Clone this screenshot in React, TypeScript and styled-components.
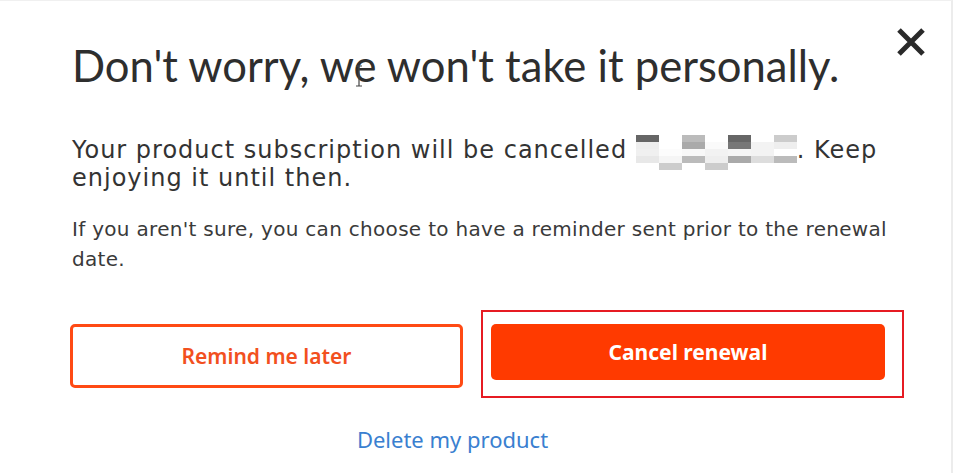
import styled, { createGlobalStyle } from "styled-components";

const GlobalStyle = createGlobalStyle`
  html, body {
    margin: 0;
    padding: 0;
    background: #fff;
  }
  body {
    font-family: "DejaVu Sans", "Noto Sans", sans-serif;
    color: #2b2b2b;
  }
`;

const Dialog = styled.section`
  position: relative;
  box-sizing: border-box;
  width: 953px;
  height: 473px;
  border-top: 1px solid #f0f0f0;
  border-right: 2px solid #ececec;
  padding: 38px 0 0 70px;
`;

const CloseButton = styled.button`
  position: absolute;
  top: 25px;
  right: 24px;
  width: 32px;
  height: 32px;
  padding: 0;
  border: none;
  background: none;
  cursor: pointer;
  color: #2a2a2a;
  svg {
    width: 32px;
    height: 32px;
  }
`;

const Title = styled.h1`
  margin: 0 0 0 2px;
  font-family: Lato, "Noto Sans", sans-serif;
  font-weight: 400;
  font-size: 43.6px;
  line-height: 52px;
  color: #2e2e2e;
`;

const Lead = styled.p`
  margin: 45px 0 0 2px;
  width: 830px;
  font-size: 24px;
  line-height: 28px;
  letter-spacing: 1px;
  color: #333;
`;

const Note = styled.p`
  margin: 22px 0 0 2px;
  width: 830px;
  font-size: 20px;
  line-height: 30px;
  letter-spacing: 0.3px;
  color: #3a3a3a;
`;

const Blur = styled.span`
  position: relative;
  display: inline-block;
  width: 161px;
  height: 20px;
`;

const BlurGrid = styled.span`
  position: absolute;
  left: 0;
  top: -3px;
  display: grid;
  grid-template-columns: repeat(7, 23px);
  grid-auto-rows: 7px;
`;

const Pixel = styled.span<{ $c: string }>`
  background: ${({ $c }) => $c};
`;

const Actions = styled.div`
  display: flex;
  align-items: flex-start;
  gap: 18px;
  margin-top: 50px;
`;

const OutlineButton = styled.button`
  box-sizing: border-box;
  width: 393px;
  height: 64px;
  border: 3px solid #ff4a14;
  border-radius: 5px;
  background: #fff;
  color: #f2501e;
  font-family: "Noto Sans", sans-serif;
  font-weight: 600;
  font-size: 21px;
  cursor: pointer;
`;

const Highlight = styled.div`
  box-sizing: border-box;
  width: 423px;
  height: 88px;
  margin-top: -14px;
  border: 2px solid #e61b23;
  padding: 12px 0 0 8px;
`;

const SolidButton = styled.button`
  box-sizing: border-box;
  width: 394px;
  height: 56px;
  border: none;
  border-radius: 5px;
  background: #ff3a00;
  color: #fff;
  font-family: "Noto Sans", sans-serif;
  font-weight: 700;
  font-size: 21px;
  cursor: pointer;
`;

const LinkRow = styled.div`
  display: flex;
  justify-content: center;
  width: 765px;
  margin-top: 26px;
`;

const TextLink = styled.a`
  color: #3a7fd0;
  font-family: "Noto Sans", sans-serif;
  font-size: 22px;
  line-height: 30px;
  text-decoration: none;
  cursor: pointer;
`;

const Cursor = styled.svg`
  position: absolute;
  left: 354px;
  top: 64px;
  width: 10px;
  height: 22px;
`;

const blurCols = [
  ["#666", "#eee", "#f0f0f0", "#e8e8e8", "#fff"],
  ["#fff", "#fff", "#fcfcfc", "#f5f5f5", "#ccc"],
  ["#bbb", "#aaa", "#f8f8f8", "#bbb", "#fff"],
  ["#fff", "#fafafa", "#f2f2f2", "#eee", "#ccc"],
  ["#666", "#777", "#f5f5f5", "#aaa", "#fff"],
  ["#fff", "#f3f3f3", "#f3f3f3", "#ddd", "#fff"],
  ["#ccc", "#eee", "#fff", "#bbb", "#fff"],
];

const blurCells: string[] = [];
for (let r = 0; r < 5; r++) {
  for (let c = 0; c < 7; c++) blurCells.push(blurCols[c][r]);
}

export default function App() {
  return (
    <>
      <GlobalStyle />
      <Dialog>
        <CloseButton aria-label="Close">
          <svg viewBox="0 0 32 32" fill="none" stroke="currentColor" strokeWidth="5">
            <path d="M4 4L28 28M28 4L4 28" />
          </svg>
        </CloseButton>
        <Title>Don't worry, we won't take it personally.</Title>
        <Cursor viewBox="0 0 10 22" fill="none" stroke="#444" strokeWidth="1.2">
          <path d="M2 1h6M5 1v20M2 21h6" />
        </Cursor>
        <Lead>
          Your product subscription will be cancelled{" "}
          <Blur>
            <BlurGrid>
              {blurCells.map((c, i) => (
                <Pixel key={i} $c={c} />
              ))}
            </BlurGrid>
          </Blur>
          . Keep enjoying it until then.
        </Lead>
        <Note>
          If you aren't sure, you can choose to have a reminder sent prior to the renewal date.
        </Note>
        <Actions>
          <OutlineButton>Remind me later</OutlineButton>
          <Highlight>
            <SolidButton>Cancel renewal</SolidButton>
          </Highlight>
        </Actions>
        <LinkRow>
          <TextLink>Delete my product</TextLink>
        </LinkRow>
      </Dialog>
    </>
  );
}
